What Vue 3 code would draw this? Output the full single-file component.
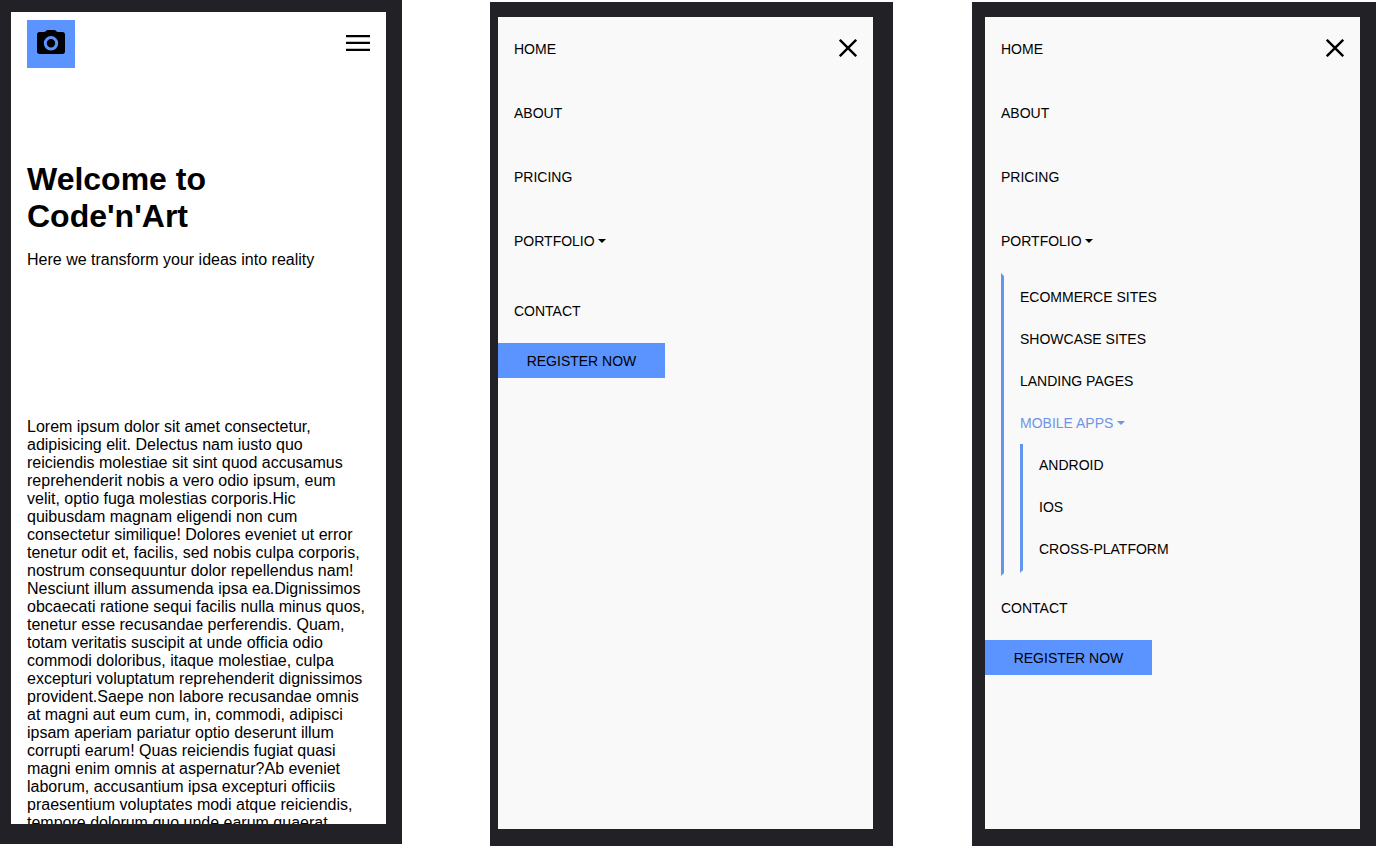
<script setup>
const intro =
  "Lorem ipsum dolor sit amet consectetur, adipisicing elit. Delectus nam iusto quo reiciendis molestiae sit sint quod accusamus reprehenderit nobis a vero odio ipsum, eum velit, optio fuga molestias corporis.Hic quibusdam magnam eligendi non cum consectetur similique! Dolores eveniet ut error tenetur odit et, facilis, sed nobis culpa corporis, nostrum consequuntur dolor repellendus nam! Nesciunt illum assumenda ipsa ea.Dignissimos obcaecati ratione sequi facilis nulla minus quos, tenetur esse recusandae perferendis. Quam, totam veritatis suscipit at unde officia odio commodi doloribus, itaque molestiae, culpa excepturi voluptatum reprehenderit dignissimos provident.Saepe non labore recusandae omnis at magni aut eum cum, in, commodi, adipisci ipsam aperiam pariatur optio deserunt illum corrupti earum! Quas reiciendis fugiat quasi magni enim omnis at aspernatur?Ab eveniet laborum, accusantium ipsa excepturi officiis praesentium voluptates modi atque reiciendis, tempore dolorum quo unde earum quaerat";

const links = ["HOME", "ABOUT", "PRICING"];
const portfolio = ["ECOMMERCE SITES", "SHOWCASE SITES", "LANDING PAGES"];
const mobile = ["ANDROID", "IOS", "CROSS-PLATFORM"];
const menus = [
  { id: "closed", open: false },
  { id: "expanded", open: true },
];
</script>

<template>
  <main class="board">
    <section class="phone home">
      <div class="screen page">
        <header class="topbar">
          <a class="logo">
            <svg width="28" height="24" viewBox="0 0 28 24">
              <path
                d="M2.500 2H7c.8 0 1.300-.3 1.700-.8L9.300.6C9.700.2 10.200 0 10.800 0h6.400c.6 0 1.100.2 1.500.6l.6.6c.4.5.9.8 1.700.8h4.500C27 2 28 3 28 4.500v17c0 1.500-1 2.500-2.500 2.500h-23C1 24 0 23 0 21.500v-17C0 3 1 2 2.500 2z"
              />
              <circle class="lens" cx="14" cy="13.300" r="5.700" />
            </svg>
          </a>
          <svg class="menu" width="24" height="16" viewBox="0 0 24 16">
            <path d="M0 0h24v2.350H0zM0 6.650h24V9H0zM0 13.650h24V16H0z" />
          </svg>
        </header>
        <div class="hero">
          <h1>Welcome to<br />Code'n'Art</h1>
          <p>Here we transform your ideas into reality</p>
        </div>
        <p class="copy">{{ intro }}</p>
      </div>
    </section>

    <section v-for="menu in menus" :key="menu.id" class="phone" :class="menu.id">
      <nav class="screen drawer">
        <svg class="close" width="18" height="18" viewBox="0 0 18 18">
          <path d="M.8.8l16.400 16.400M17.200.8L.8 17.200" />
        </svg>
        <a v-for="link in links" :key="link" class="link">{{ link }}</a>
        <a class="link caret">PORTFOLIO</a>
        <div class="submenu">
          <template v-if="menu.open">
            <a v-for="item in portfolio" :key="item" class="sublink">{{ item }}</a>
            <a class="sublink caret active">MOBILE APPS</a>
            <div class="submenu nested">
              <a v-for="item in mobile" :key="item" class="sublink">{{ item }}</a>
            </div>
          </template>
        </div>
        <a class="link">CONTACT</a>
        <a class="register">REGISTER NOW</a>
      </nav>
    </section>
  </main>
</template>

<style>
body {
  background: #fff;
  overflow: hidden;
}
</style>

<style scoped>
.board {
  display: flex;
  width: 1376px;
  height: 846px;
  overflow: hidden;
  font-family: "Liberation Sans", Arial, sans-serif;
  color: #000;
}
.phone {
  box-sizing: border-box;
  flex: none;
  height: 844px;
  background: #222226;
}
.home {
  width: 402px;
  padding: 12px 16px 20px 11px;
}
.closed {
  width: 403px;
  margin: 2px 0 0 88px;
  padding: 15px 20px 17px 8px;
}
.expanded {
  width: 404px;
  margin: 2px 0 0 79px;
  padding: 15px 16px 17px 13px;
}
.screen {
  box-sizing: border-box;
  width: 375px;
  height: 812px;
  overflow: hidden;
}
.page {
  padding: 8px 16px 0;
  background: #fff;
}
.topbar {
  display: flex;
  justify-content: space-between;
  height: 48px;
}
.logo {
  box-sizing: border-box;
  width: 48px;
  height: 48px;
  padding: 10px;
  background: #5c94ff;
}
.logo svg {
  display: block;
}
.lens {
  fill: none;
  stroke: #5c94ff;
  stroke-width: 3;
}
.menu {
  margin-top: 15px;
}
.hero {
  height: 237px;
  margin-top: 93px;
}
h1 {
  margin: 0;
  font-size: 32px;
  line-height: 37px;
}
.hero p {
  margin: 16px 0 0;
  font-size: 16px;
  line-height: 18px;
}
.copy {
  margin: 20px 0 0;
  font-size: 16px;
  line-height: 18px;
}
.drawer {
  position: relative;
  display: flex;
  flex-direction: column;
  align-items: flex-start;
  background: #f9f9f9;
  font-size: 14px;
}
.close {
  position: absolute;
  top: 22px;
  right: 16px;
  fill: none;
  stroke: #000;
  stroke-width: 2.400;
}
.link {
  padding-left: 16px;
  line-height: 64px;
}
.submenu {
  margin-left: 16px;
  padding-left: 16px;
  border: 3px solid transparent;
}
.expanded .submenu {
  border-left-color: #6495ed;
}
.nested {
  margin-left: 0;
  border-top: 0;
}
.sublink {
  display: block;
  line-height: 42px;
}
.active {
  color: #6f94e6;
}
.caret::after {
  content: "";
  display: inline-block;
  margin-left: 0.255em;
  vertical-align: 0.19em;
  border-top: 0.3em solid;
  border-right: 0.3em solid transparent;
  border-left: 0.3em solid transparent;
}
.register {
  box-sizing: border-box;
  width: 167px;
  height: 35px;
  padding-top: 1px;
  background: #5c94ff;
  line-height: 34px;
  text-align: center;
}
</style>
